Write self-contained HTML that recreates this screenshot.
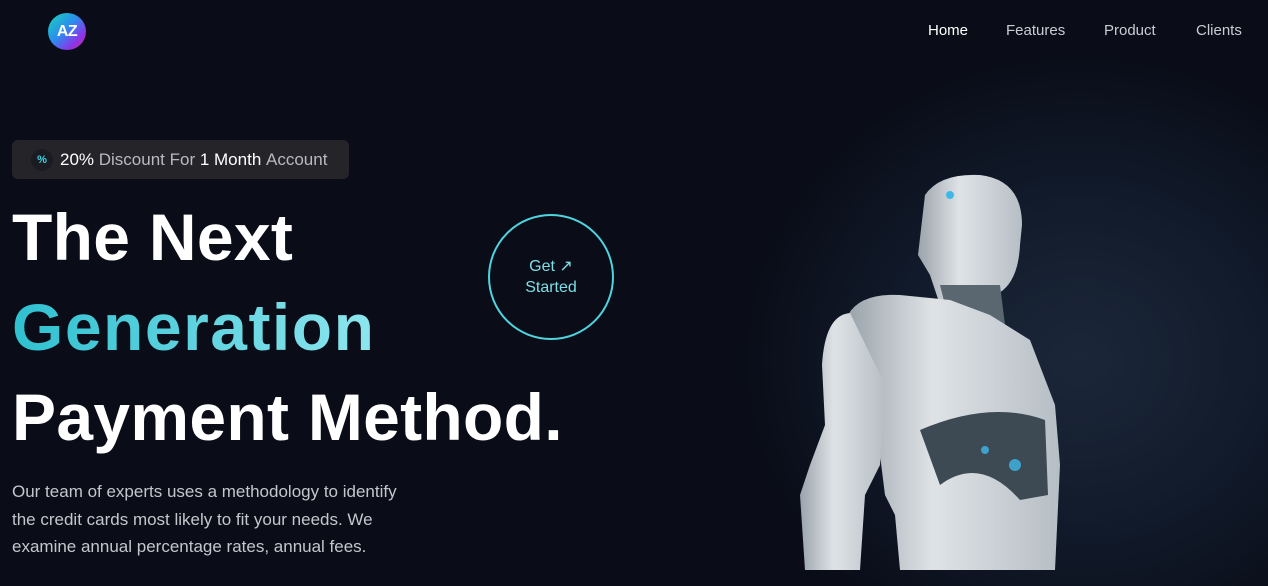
<!DOCTYPE html>
<html><head><meta charset="utf-8"><style>
*{margin:0;padding:0;box-sizing:border-box}
body{width:1268px;height:586px;overflow:hidden;font-family:"Liberation Sans",sans-serif;
background:radial-gradient(ellipse 420px 380px at 1080px 360px,#1b2739 0%,#111a2a 45%,#0a0d18 80%),#070913;position:relative;color:#fff}
.logo{position:absolute;left:48px;top:13px;width:38px;height:37px;border-radius:50%;
background:linear-gradient(135deg,#17d6b5 0%,#2b8cf0 45%,#8b35e8 75%,#d22b8f 100%);
font-weight:900;font-size:16px;color:#fff;display:flex;align-items:center;justify-content:center;letter-spacing:-0.5px}
nav span{position:absolute;top:22px;font-size:15px;color:#c9ccd3;white-space:nowrap}
.badge{position:absolute;left:12px;top:140px;width:337px;height:39px;border-radius:6px;background:#242429;
display:flex;align-items:center;font-size:17px;color:#b8bac0;white-space:nowrap}
.badge .ic{width:22px;height:22px;border-radius:50%;background:#1a1c22;margin:0 7px 0 19px;color:#38d6e6;font-size:11px;display:flex;align-items:center;justify-content:center;font-weight:bold}
.badge b{color:#fff;font-weight:normal}
h1{position:absolute;left:12px;top:192px;font-size:66px;line-height:90px;font-weight:bold;letter-spacing:0.3px}
.g{background:linear-gradient(90deg,#2fc0d0,#8ee6ee);-webkit-background-clip:text;color:transparent;letter-spacing:1.5px}
p{position:absolute;left:12px;top:478px;font-size:17px;line-height:27.5px;color:#c4c6cc;width:405px}
.btn{position:absolute;left:488px;top:214px;width:126px;height:126px;border:2px solid #4fd3de;border-radius:50%;
display:flex;align-items:center;justify-content:center;text-align:center;color:#7fdfe6;font-size:16px;line-height:21px}
svg.r{position:absolute;left:790px;top:165px}
</style></head><body>
<div class="logo">AZ</div>
<nav><span style="left:928px;color:#fff">Home</span><span style="left:1006px">Features</span><span style="left:1104px">Product</span><span style="left:1196px">Clients</span></nav>
<div class="badge"><div class="ic">%</div><b>20%</b>&nbsp;Discount For&nbsp;<b>1 Month</b>&nbsp;Account</div>
<h1>The Next<br><span class="g">Generation</span><br>Payment Method.</h1>
<div class="btn">Get ↗<br>Started</div>
<p>Our team of experts uses a methodology to identify the credit cards most likely to fit your needs. We examine annual percentage rates, annual fees.</p>
<svg class="r" width="290" height="410" viewBox="0 0 290 410">
<defs><linearGradient id="m" x1="0" y1="0" x2="1" y2="0"><stop offset="0" stop-color="#9aa3ab"/><stop offset=".4" stop-color="#dfe3e6"/><stop offset="1" stop-color="#b6bec5"/></linearGradient></defs>
<path d="M135 30 Q150 8 190 10 Q232 15 232 60 L230 80 Q228 120 205 130 L200 150 L180 150 L150 140 L140 110 L128 90 Z" fill="url(#m)"/>
<path d="M150 120 L210 120 L215 160 L160 160 Z" fill="#5a6670"/>
<path d="M58 150 Q70 128 110 130 L160 135 L200 150 L240 175 L265 240 L270 300 L265 405 L110 405 L105 350 L95 330 L90 290 Z" fill="url(#m)"/>
<path d="M130 265 Q200 235 255 255 L258 330 L230 335 Q190 290 150 320 Z" fill="#3d4953"/>
<path d="M60 148 Q35 150 32 200 L35 260 L20 300 L10 330 L15 405 L70 405 L75 330 L90 300 L95 220 Z" fill="url(#m)"/>
<circle cx="225" cy="300" r="6" fill="#3fb8e8" opacity=".8"/><circle cx="195" cy="285" r="4" fill="#3fb8e8" opacity=".8"/>
<circle cx="160" cy="30" r="4" fill="#3fb8e8"/>
</svg>
</body></html>
